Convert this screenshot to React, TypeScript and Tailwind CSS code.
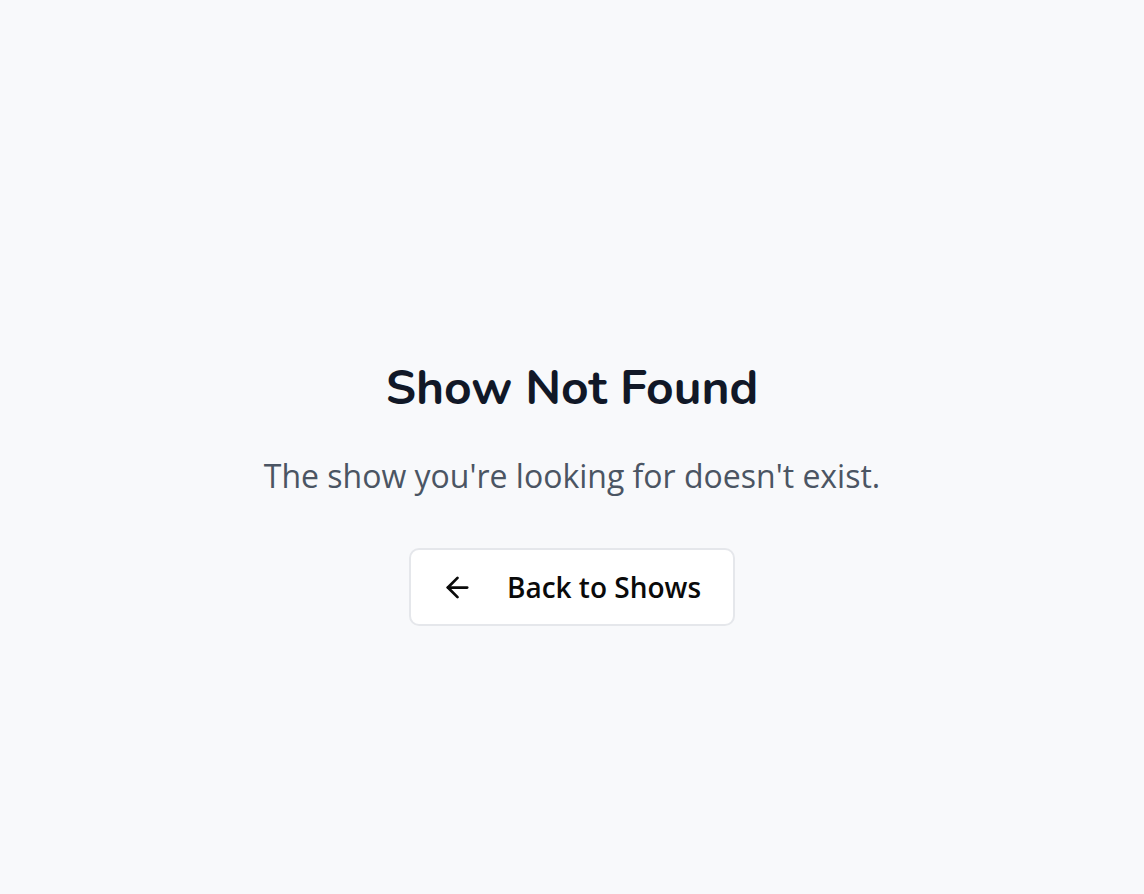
import { ArrowLeft } from "lucide-react";

export default function App() {
  return (
    <div className="min-h-screen bg-[#f8f9fb] flex flex-col items-center pt-[358px] font-['Open_Sans',sans-serif]">
      <h1 className="text-[48px] leading-[60px] font-bold text-[#111827] font-['Nunito','Open_Sans',sans-serif]">
        Show Not Found
      </h1>
      <p className="mt-[38px] text-[32px] leading-[40px] text-[#4b5563]">
        The show you're looking for doesn't exist.
      </p>
      <button className="mt-[52px] flex items-center gap-[33px] h-[78px] pl-[30px] pr-[32px] bg-white border-2 border-[#e5e7eb] rounded-[10px] text-[28px] font-semibold text-[#0a0a0a]">
        <ArrowLeft className="w-[33px] h-[33px]" strokeWidth={2} />
        Back to Shows
      </button>
    </div>
  );
}
